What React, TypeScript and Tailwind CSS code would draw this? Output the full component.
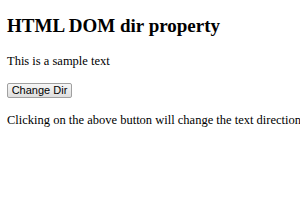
export default function App() {
  return (
    <div className="min-h-screen bg-white px-[7px] pt-[14px] text-black font-['Liberation_Serif',serif] overflow-hidden">
      <h2 className="text-[19px] font-bold leading-[24px] whitespace-nowrap">HTML DOM dir property</h2>
      <p className="mt-[15px] text-[12.5px] leading-[16px] whitespace-nowrap">This is a sample text</p>
      <button className="mt-[14px] block h-[15px] w-[65px] border border-[#a0a0a0] rounded-[2px] bg-gradient-to-b from-[#f6f6f6] to-[#dedede] font-['Liberation_Sans',sans-serif] text-[11px] leading-[13px] text-black">
        Change Dir
      </button>
      <p className="mt-[14px] text-[12.5px] leading-[16px] whitespace-nowrap">Clicking on the above button will change the text direction</p>
    </div>
  );
}
